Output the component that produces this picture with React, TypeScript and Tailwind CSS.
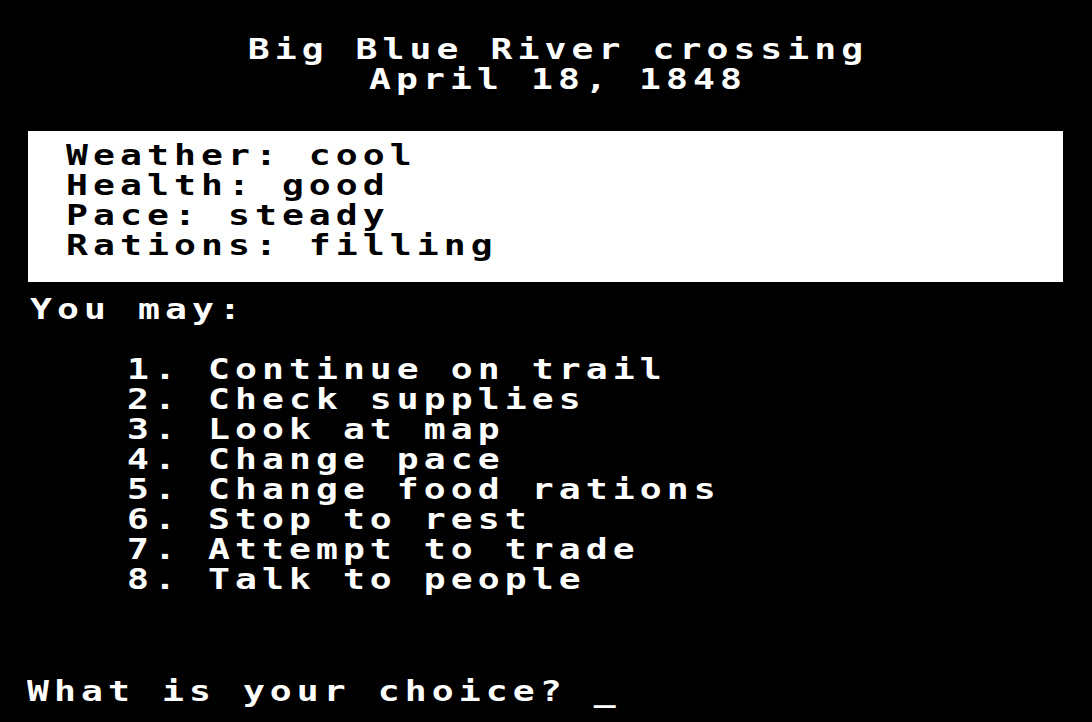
const stats = ["Weather: cool", "Health: good", "Pace: steady", "Rations: filling"];

const options = [
  "Continue on trail",
  "Check supplies",
  "Look at map",
  "Change pace",
  "Change food rations",
  "Stop to rest",
  "Attempt to trade",
  "Talk to people",
];

// wide blocky glyphs, like the old 40-column screen
const line = "origin-left scale-x-[1.3]";

export default function App() {
  return (
    <div className="h-[722px] w-full overflow-hidden bg-black font-['DejaVu_Sans_Mono','Liberation_Mono',monospace] text-[28px] leading-[30px] font-bold tracking-[3.9px] text-white whitespace-pre">
      {/* Header */}
      <div className="pt-[35px] pl-6 text-center">
        <p className="scale-x-[1.3]">Big Blue River crossing</p>
        <p className="scale-x-[1.3]">April 18, 1848</p>
      </div>

      {/* Status box */}
      <div className="mt-[36px] ml-7 mr-[29px] bg-white pt-[10px] pb-[21px] pl-[38px] text-black">
        {stats.map((s) => (
          <p key={s} className={line}>
            {s}
          </p>
        ))}
      </div>

      <div className="mt-[13px] pl-[30px]">
        <p className={line}>You may:</p>
      </div>

      {/* Menu */}
      <ol className="mt-[30px] pl-[127px]">
        {options.map((o, i) => (
          <li key={o} className={line}>
            {i + 1}. {o}
          </li>
        ))}
      </ol>

      <div className="mt-[82px] pl-[27px]">
        <p className={line}>What is your choice? _</p>
      </div>
    </div>
  );
}
